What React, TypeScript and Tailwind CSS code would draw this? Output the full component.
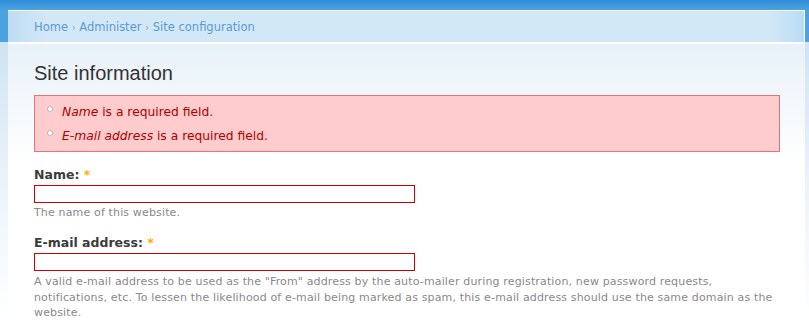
export default function App() {
  const errors = [
    { field: "Name", rest: " is a required field." },
    { field: "E-mail address", rest: " is a required field." },
  ];

  return (
    <div className="w-[809px] h-[323px] overflow-hidden bg-[linear-gradient(to_bottom,#2f8ad8_0px,#4aa3df_10px,#4aa3df_42px,#cfe3f3_42px,#eef5fb_200px,#ffffff_323px)] font-['DejaVu_Sans',Verdana,sans-serif]">
      <div className="ml-[8px] mr-[4px] pt-[10px] h-full flex flex-col">
        {/* Breadcrumb */}
        <div className="h-[32px] border-t border-r border-white bg-[linear-gradient(to_right,#bfdcf3_0px,#d3e8f7_40px,#d3e8f7_760px,#b9dbf4_797px)] pl-[26px] pt-[8px] text-[11.5px] text-[#5a9ad3]">
          Home <span className="text-[#7aa9d6] text-[10px]">›</span> Administer{" "}
          <span className="text-[#7aa9d6] text-[10px]">›</span> Site configuration
        </div>

        {/* Content */}
        <div className="flex-1 border-t-2 border-white bg-[linear-gradient(to_bottom,#e8f1f9,#ffffff_120px)] pl-[26px] pr-[25px]">
          <h1 className="mt-[17px] text-[20px] leading-[24px] text-[#333333] font-['Liberation_Sans',Arial,sans-serif]">
            Site information
          </h1>

          <div className="mt-[10px] h-[57px] border border-[#dd7777] bg-[#fecccc] pl-[12px] pt-[4px]">
            {errors.map((e) => (
              <div key={e.field} className="relative h-[24px] leading-[24px] pl-[15px] text-[12.3px] text-[#b00000]">
                <span className="absolute left-0 top-[6px] w-[6px] h-[6px] rounded-full border border-[#b8b8b8] bg-white" />
                <i>{e.field}</i>
                {e.rest}
              </div>
            ))}
          </div>

          <div className="mt-[15px]">
            <label className="block text-[12.5px] font-bold text-[#3b3b3b] leading-[16px]">
              Name: <span className="text-[#ffae00]">*</span>
            </label>
            <input className="block mt-[2px] w-[381px] h-[18px] border border-[#cc0000] bg-white" />
            <p className="mt-[2px] text-[11px] tracking-[0.15px] text-[#898989] leading-[16px]">The name of this website.</p>
          </div>

          <div className="mt-[14px]">
            <label className="block text-[12.5px] font-bold text-[#3b3b3b] leading-[16px]">
              E-mail address: <span className="text-[#ffae00]">*</span>
            </label>
            <input className="block mt-[2px] w-[381px] h-[18px] border border-[#cc0000] bg-white" />
            <p className="mt-[3px] text-[11px] tracking-[0.15px] text-[#898989] leading-[15.5px]">
              A valid e-mail address to be used as the "From" address by the auto-mailer during registration, new password
              requests, notifications, etc. To lessen the likelihood of e-mail being marked as spam, this e-mail address should
              use the same domain as the website.
            </p>
          </div>
        </div>
      </div>
    </div>
  );
}
